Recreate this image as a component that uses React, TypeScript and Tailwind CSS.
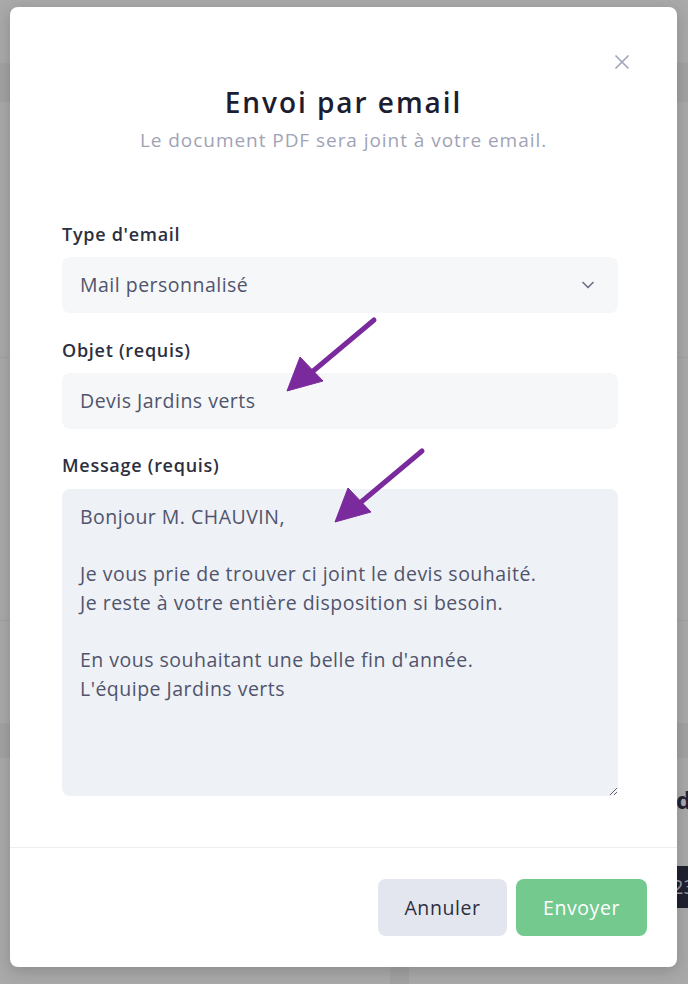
import { X, ChevronDown } from 'lucide-react';

const font = { fontFamily: '"Open Sans", "Noto Sans", sans-serif' };

export default function App() {
  return (
    <div className="relative h-[984px] w-[688px] overflow-hidden bg-[#a9a9a9]" style={font}>
      {/* page behind the overlay */}
      <div className="absolute left-0 right-0 top-[63px] h-[39px] bg-[#a2a2a2]" />
      <div className="absolute left-0 right-0 top-[357px] h-px bg-[#a1a1a1]" />
      <div className="absolute left-0 right-0 top-[620px] h-px bg-[#a1a1a1]" />
      <div className="absolute left-0 right-0 top-[723px] h-[35px] bg-[#a2a2a2]" />
      <div className="absolute left-[676px] top-[788px] text-[24px] font-bold leading-none text-[#1f2333]">d</div>
      <div className="absolute left-[672px] top-[866px] flex h-[42px] w-[20px] items-center bg-[#1f2130] text-[20px] text-[#9a9aa5]">23</div>
      <div className="absolute left-[390px] top-[967px] h-[17px] w-[19px] bg-[#a2a2a2]" />

      {/* modal */}
      <div className="absolute left-[10px] top-[7px] flex h-[960px] w-[667px] flex-col rounded-lg bg-white shadow-[0_4px_16px_rgba(0,0,0,0.18)]">
        <button className="absolute right-[43px] top-[43px] text-[#a3a6b8]">
          <X size={24} strokeWidth={1.7} />
        </button>

        <div className="flex flex-col items-center pt-[77px]">
          <h2 className="text-[28px] font-semibold leading-[36px] tracking-[0.07em] text-[#1c1d31]">Envoi par email</h2>
          <p className="mt-[7px] text-[19px] leading-[26px] tracking-[0.05em] text-[#a0a3b6]">Le document PDF sera joint à votre email.</p>
        </div>

        <div className="ml-[52px] mt-[68px] flex w-[556px] flex-col">
          <label className="text-[18px] font-semibold leading-[26px] tracking-[0.04em] text-[#2c2f40]">Type d'email</label>
          <div className="mt-[10px] flex h-[56px] items-center justify-between rounded-lg bg-[#f6f7f9] pl-[18px] pr-[20px] text-[19.5px] tracking-[0.025em] text-[#50546c]">
            <span>Mail personnalisé</span>
            <ChevronDown size={20} strokeWidth={2} className="text-[#6b6f86]" />
          </div>

          <label className="mt-[24px] text-[18px] font-semibold leading-[26px] tracking-[0.04em] text-[#2c2f40]">Objet (requis)</label>
          <div className="mt-[10px] flex h-[56px] items-center rounded-lg bg-[#f6f7f9] pl-[18px] text-[19.5px] tracking-[0.025em] text-[#50546c]">
            Devis Jardins verts
          </div>

          <label className="mt-[23px] text-[18px] font-semibold leading-[26px] tracking-[0.04em] text-[#2c2f40]">Message (requis)</label>
          <textarea
            readOnly
            className="mt-[11px] h-[307px] rounded-lg bg-[#eef1f6] px-[18px] py-[14px] text-[19.5px] leading-[28.6px] tracking-[0.025em] text-[#50546c] outline-none"
            style={font}
            value={
              "Bonjour M. CHAUVIN,\n\nJe vous prie de trouver ci joint le devis souhaité.\nJe reste à votre entière disposition si besoin.\n\nEn vous souhaitant une belle fin d'année.\nL'équipe Jardins verts"
            }
          />
        </div>

        <div className="mt-auto border-t border-[#eceef2] px-[30px] pb-[31px] pt-[31px]">
          <div className="flex justify-end gap-[9px]">
            <button className="h-[57px] w-[129px] rounded-lg bg-[#e3e6ee] text-[19.5px] font-medium tracking-[0.03em] text-[#2c2f40]">Annuler</button>
            <button className="h-[57px] w-[131px] rounded-lg bg-[#73c98e] text-[19.5px] font-medium tracking-[0.03em] text-white">Envoyer</button>
          </div>
        </div>
      </div>

      {/* annotation arrows */}
      <svg className="pointer-events-none absolute left-0 top-0" width="688" height="984">
        <g fill="#7b2a9e" stroke="#7b2a9e">
          <line x1="374" y1="320" x2="312" y2="372" strokeWidth="5" strokeLinecap="round" />
          <polygon points="287,391 300,357 323,381" strokeWidth="1" strokeLinejoin="round" />
          <line x1="422" y1="451" x2="360" y2="503" strokeWidth="5" strokeLinecap="round" />
          <polygon points="335,522 348,488 371,512" strokeWidth="1" strokeLinejoin="round" />
        </g>
      </svg>
    </div>
  );
}
